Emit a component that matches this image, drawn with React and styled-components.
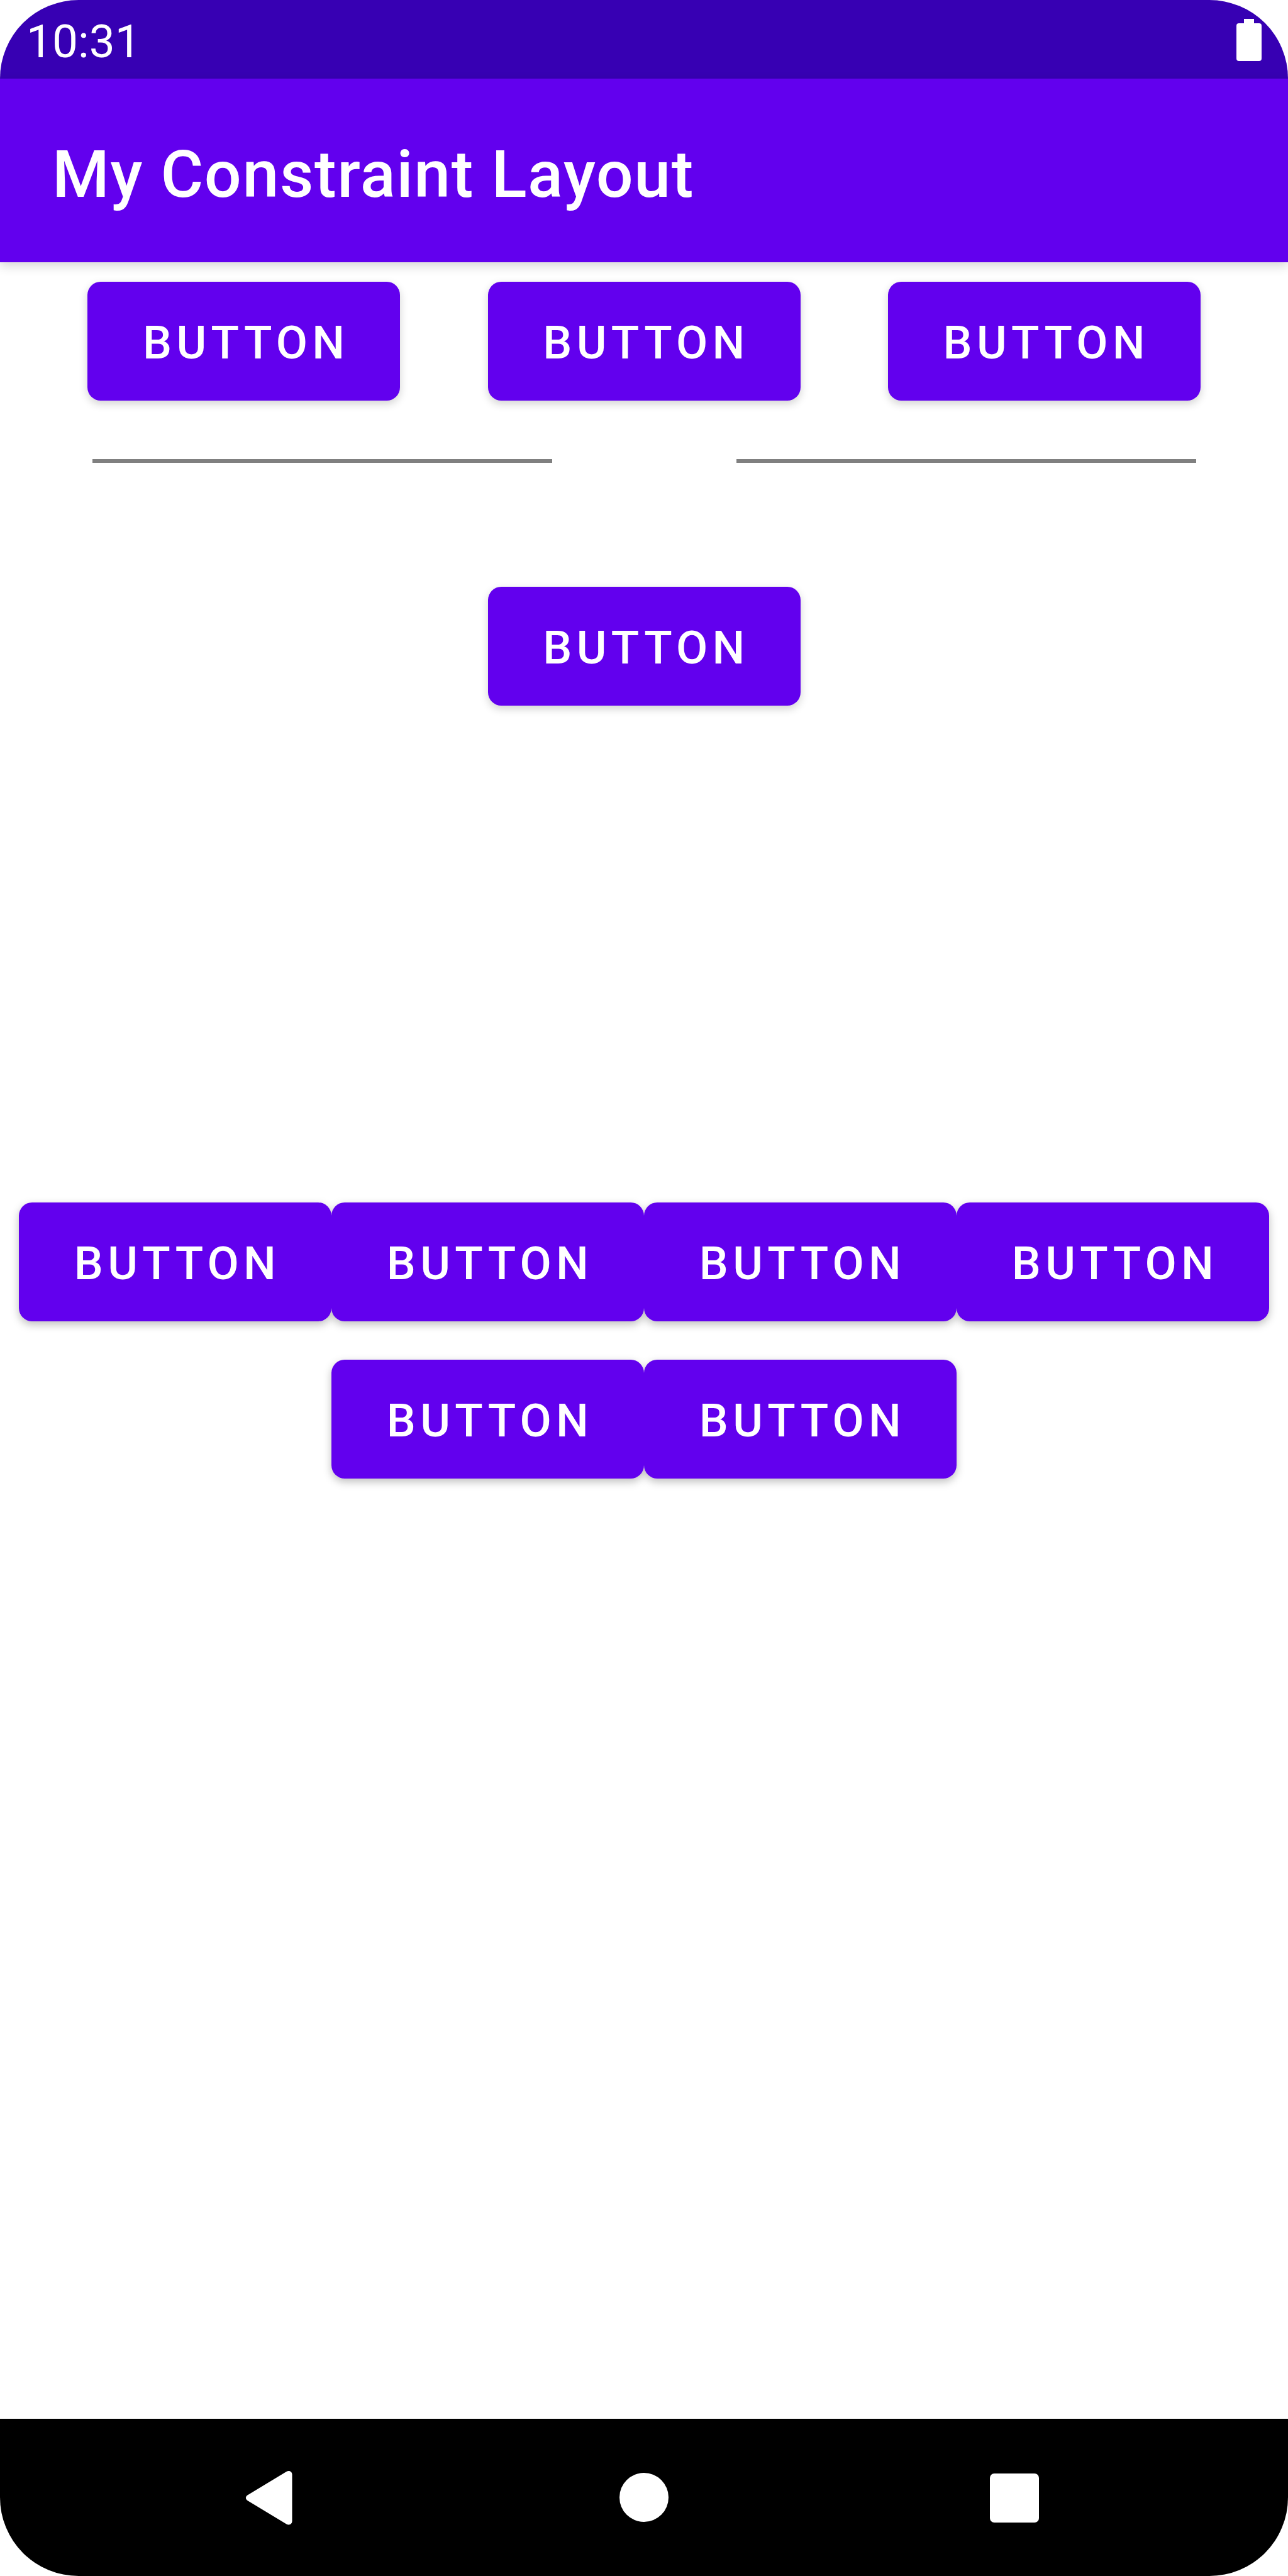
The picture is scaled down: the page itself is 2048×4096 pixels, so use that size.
import React from "react";
import styled, { createGlobalStyle } from "styled-components";

const GlobalStyle = createGlobalStyle`
  * { box-sizing: border-box; }
  body { margin: 0; background: #ffffff; }
`;

const Screen = styled.div`
  display: flex;
  flex-direction: column;
  min-height: 100vh;
  overflow: hidden;
  border-radius: 125px;
  background: #ffffff;
  color: #ffffff;
  font-family: Roboto, "Liberation Sans", sans-serif;
`;

const StatusBar = styled.div`
  display: flex;
  align-items: center;
  justify-content: space-between;
  height: 125px;
  padding: 0 42px;
  background: #3700b3;
`;

const Clock = styled.time`
  padding-top: 6px;
  font-size: 73px;
  line-height: 86px;
`;

const BatteryIcon = styled.svg`
  display: block;
  width: 40px;
  height: 68px;
`;

const AppBar = styled.header`
  display: flex;
  align-items: center;
  height: 292px;
  padding: 14px 83px 0;
  background: #6200ee;
  box-shadow: 0 6px 16px rgba(0, 0, 0, 0.16);
`;

const Title = styled.h1`
  margin: 0;
  font-size: 104px;
  font-weight: 500;
  line-height: 122px;
  letter-spacing: 0.015em;
`;

const Content = styled.main`
  display: flex;
  flex: 1;
  flex-direction: column;
  padding-top: 31px;
`;

const Row = styled.div`
  display: flex;
  justify-content: ${(p) => p.$justify || "center"};
  margin-bottom: ${(p) => p.$after}px;
  isolation: isolate;
`;

const ContainedButton = styled.button`
  position: relative;
  width: 497px;
  height: 189px;
  padding: 4px 0 0 7px;
  border: 0;
  border-radius: 21px;
  background: #6200ee;
  color: #ffffff;
  font-family: inherit;
  font-size: 73px;
  font-weight: 500;
  line-height: 86px;
  letter-spacing: 0.1em;
  text-align: center;

  &::before {
    content: "";
    position: absolute;
    inset: 0;
    z-index: -1;
    border-radius: 21px;
    box-shadow: 0 5px 14px rgba(0, 0, 0, ${(p) => (p.$raised ? 0.26 : 0.18)});
  }
`;

const TextField = styled.input`
  width: 731px;
  height: 99px;
  padding: 0;
  border: 0;
  border-bottom: 6px solid #808080;
  border-radius: 0;
  outline: 0;
  background: transparent;
  color: #212121;
  font-family: inherit;
  font-size: 73px;
`;

const NavBar = styled.nav`
  display: flex;
  justify-content: center;
  height: 250px;
  background: #000000;
`;

const NavButton = styled.button`
  display: flex;
  align-items: center;
  justify-content: center;
  width: 589px;
  padding: 0;
  border: 0;
  background: transparent;
`;

const NavIcon = styled.svg`
  display: block;
  width: 100px;
  height: 100px;
  fill: #ffffff;
`;

function ButtonRow({ count, after, justify, raised }) {
  return (
    <Row $after={after} $justify={justify}>
      {Array.from({ length: count }, (_, i) => (
        <ContainedButton key={i} type="button" $raised={raised}>
          BUTTON
        </ContainedButton>
      ))}
    </Row>
  );
}

export default function App() {
  return (
    <Screen>
      <GlobalStyle />
      <StatusBar>
        <Clock>10:31</Clock>
        <BatteryIcon viewBox="0 0 40 68" aria-hidden="true">
          <path
            fill="#ffffff"
            d="M12 1h16v7h8a4 4 0 0 1 4 4v52a4 4 0 0 1-4 4H4a4 4 0 0 1-4-4V12a4 4 0 0 1 4-4h8z"
          />
        </BatteryIcon>
      </StatusBar>
      <AppBar>
        <Title>My Constraint Layout</Title>
      </AppBar>
      <Content>
        <ButtonRow count={3} after={0} justify="space-evenly" />
        <Row $justify="space-around" $after={197}>
          <TextField type="text" aria-label="First value" />
          <TextField type="text" aria-label="Second value" />
        </Row>
        <ButtonRow count={1} after={790} />
        <ButtonRow count={4} after={61} raised />
        <ButtonRow count={2} after={0} raised />
      </Content>
      <NavBar>
        <NavButton type="button" aria-label="Back">
          <NavIcon viewBox="0 0 100 100">
            <path d="M8.500 46.500 L70.500 9 C75 6.500 79.500 9 79.500 14 V87.500 C79.500 92.500 75 95 70.500 92.500 L8.500 55 C5 52.500 5 49 8.500 46.500 Z" />
          </NavIcon>
        </NavButton>
        <NavButton type="button" aria-label="Home">
          <NavIcon viewBox="0 0 100 100">
            <circle cx="50" cy="50" r="39" />
          </NavIcon>
        </NavButton>
        <NavButton type="button" aria-label="Recent apps">
          <NavIcon viewBox="0 0 100 100">
            <rect x="11" y="12" width="78" height="78" rx="7" />
          </NavIcon>
        </NavButton>
      </NavBar>
    </Screen>
  );
}
